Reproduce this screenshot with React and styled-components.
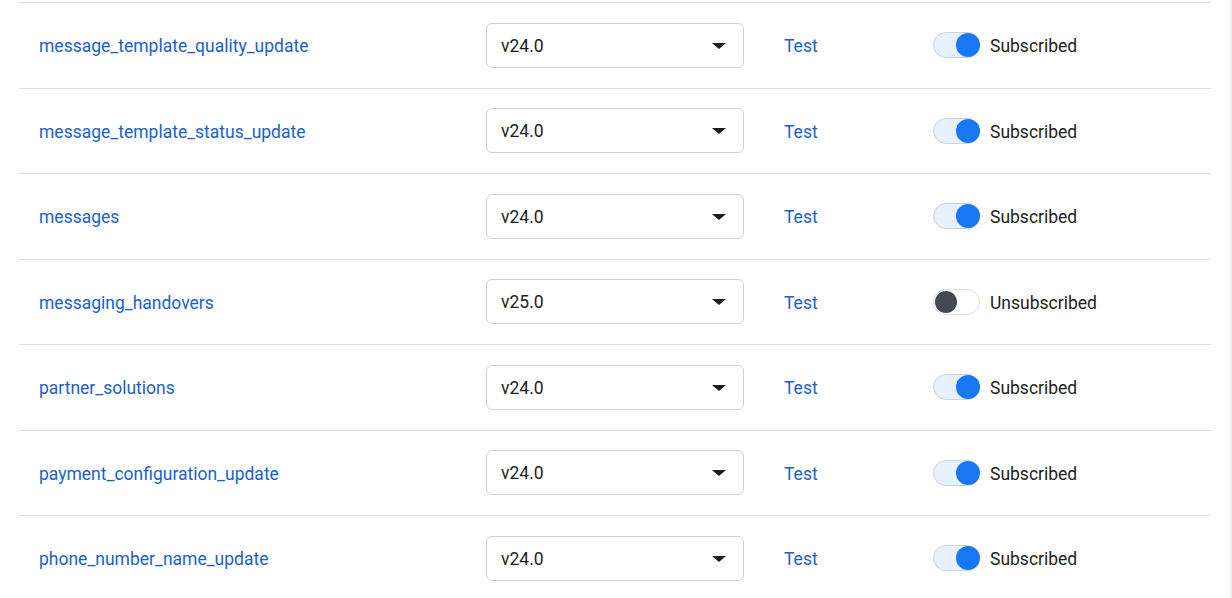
import React from "react";
import styled, { createGlobalStyle } from "styled-components";

const Global = createGlobalStyle`
  html, body { margin: 0; padding: 0; background: #fff; overflow: hidden; }
  body { font-family: Roboto, "Liberation Sans", Arial, sans-serif; }
`;

const Page = styled.div`
  padding: 2px 21px 0 19px;
  position: relative;
  height: 598px;
  box-sizing: border-box;
`;

const ScrollEdge = styled.div`
  position: absolute;
  top: 0;
  right: 0;
  width: 2px;
  height: 100%;
  background: #f0f0f0;
`;

const Table = styled.div`
  display: flex;
  flex-direction: column;
`;

const Row = styled.div`
  display: grid;
  grid-template-columns: 447px 298px 149px 1fr;
  align-items: center;
  height: 85.5px;
  box-sizing: border-box;
  border-top: 1px solid #dadde1;
  padding-left: 20px;
`;

const Name = styled.a`
  color: #1b5fcf;
  font-size: 17.5px;
  text-decoration: none;
  padding-top: 2px;
`;

const Select = styled.div`
  width: 258px;
  height: 45px;
  box-sizing: border-box;
  border: 1px solid #ced0d4;
  border-radius: 6px;
  display: flex;
  align-items: center;
  justify-content: space-between;
  padding: 1px 17px 0 14px;
  font-size: 17.5px;
  color: #1c1e21;
`;

const Caret = styled.span`
  width: 0;
  height: 0;
  border-left: 7px solid transparent;
  border-right: 7px solid transparent;
  border-top: 6px solid #1c1e21;
`;

const TestLink = styled.a`
  color: #1b5fcf;
  font-size: 17.5px;
  text-decoration: none;
  padding-top: 2px;
`;

const Status = styled.div`
  display: flex;
  align-items: center;
  gap: 10px;
  font-size: 17.5px;
  color: #1c1e21;
`;

const Label = styled.span`
  padding-top: 2px;
`;

const Track = styled.span`
  position: relative;
  width: 47px;
  height: 26px;
  box-sizing: border-box;
  border-radius: 13px;
  border: 1px solid ${(p) => (p.$on ? "#c9d3e0" : "#dadde1")};
  background: ${(p) => (p.$on ? "#e7f0fd" : "#fff")};
`;

const Knob = styled.span`
  position: absolute;
  top: 0px;
  ${(p) => (p.$on ? "right: -1px;" : "left: 1px;")}
  width: ${(p) => (p.$on ? 24 : 22)}px;
  height: ${(p) => (p.$on ? 24 : 22)}px;
  margin-top: ${(p) => (p.$on ? 0 : 1)}px;
  border-radius: 50%;
  background: ${(p) => (p.$on ? "#1877f2" : "#444950")};
`;

const rows = [
  ["message_template_quality_update", "v24.0", true],
  ["message_template_status_update", "v24.0", true],
  ["messages", "v24.0", true],
  ["messaging_handovers", "v25.0", false],
  ["partner_solutions", "v24.0", true],
  ["payment_configuration_update", "v24.0", true],
  ["phone_number_name_update", "v24.0", true],
];

export default function App() {
  return (
    <>
      <Global />
      <Page>
        <Table>
          {rows.map(([name, ver, on]) => (
            <Row key={name}>
              <Name href="#">{name}</Name>
              <Select>
                <span>{ver}</span>
                <Caret />
              </Select>
              <TestLink href="#">Test</TestLink>
              <Status>
                <Track $on={on}>
                  <Knob $on={on} />
                </Track>
                <Label>{on ? "Subscribed" : "Unsubscribed"}</Label>
              </Status>
            </Row>
          ))}
        </Table>
        <ScrollEdge />
      </Page>
    </>
  );
}
